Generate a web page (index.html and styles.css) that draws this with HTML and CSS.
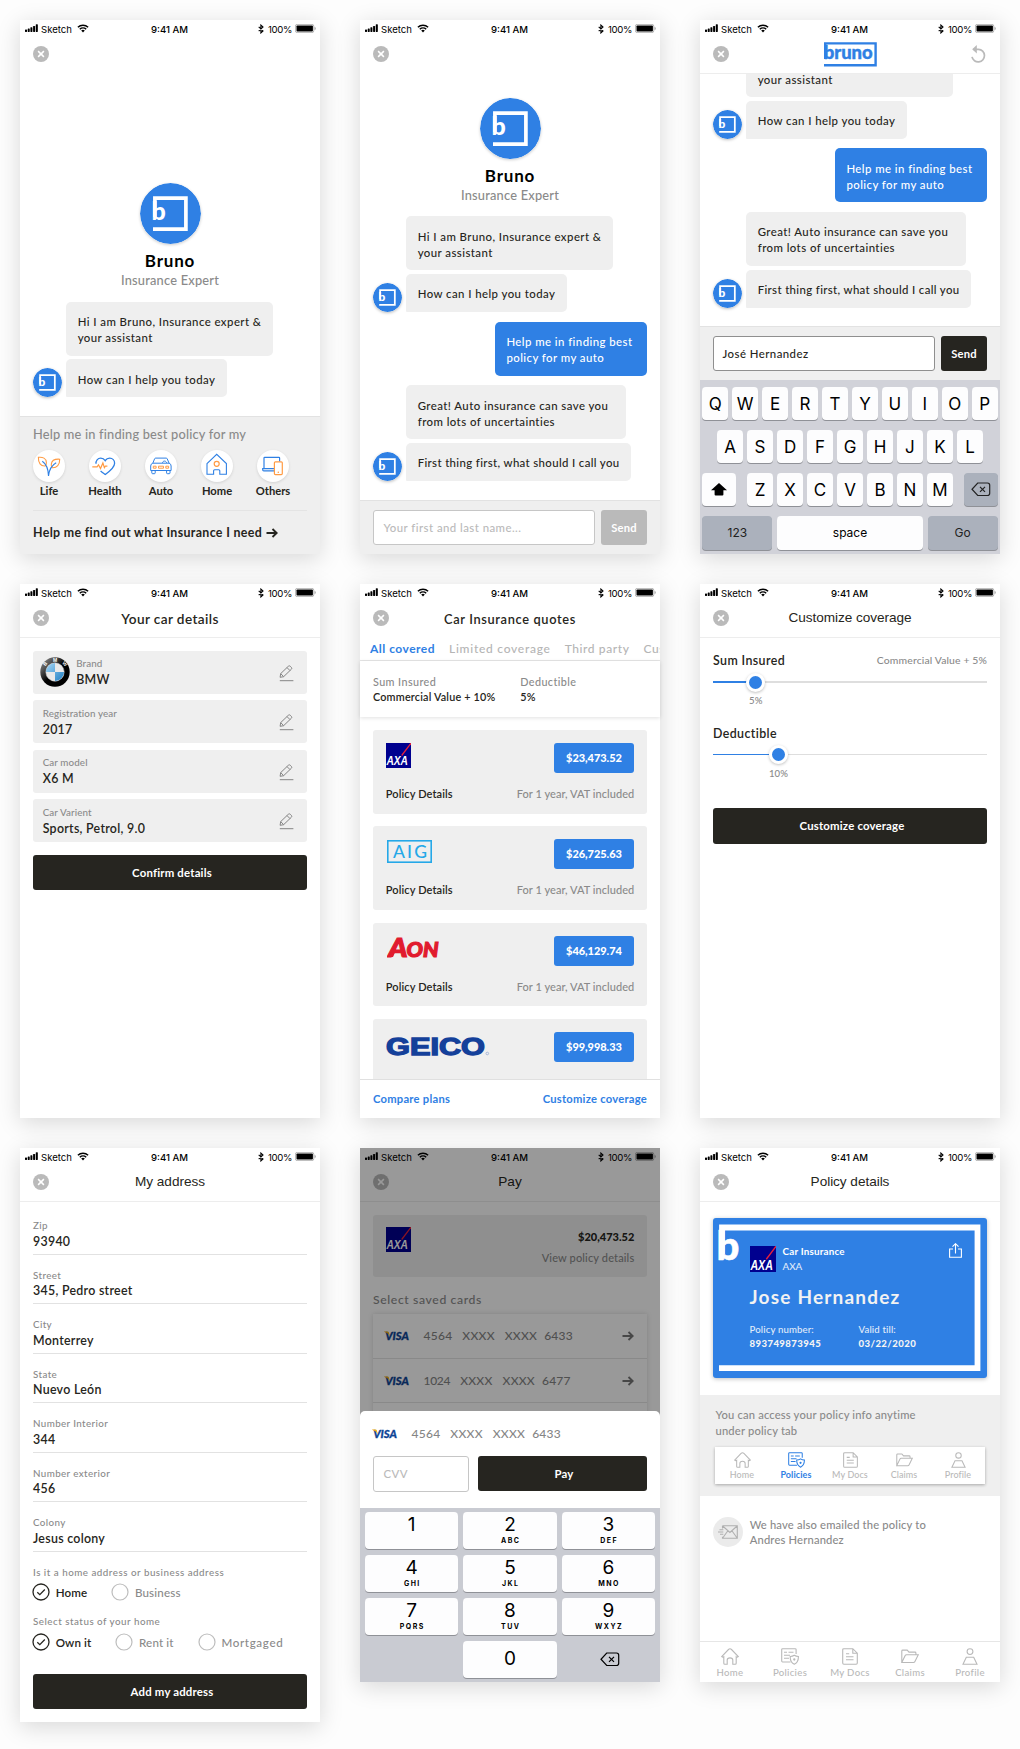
FILE: index.html
```
<!DOCTYPE html>
<html lang="en">
<head>
<meta charset="utf-8">
<title>Bruno – Insurance assistant</title>
<link rel="stylesheet" href="styles.css">
</head>
<body>
<svg class="sprite" aria-hidden="true">
  <symbol id="signal" viewBox="0 0 14 9"><rect x="0" y="5.6" width="2.1" height="2.6" rx=".5"/><rect x="2.8" y="4.6" width="2.1" height="3.6" rx=".5"/><rect x="5.6" y="3.2" width="2.1" height="5" rx=".5"/><rect x="8.4" y="1.8" width="2.1" height="6.4" rx=".5"/><rect x="11.2" y=".2" width="2.1" height="8" rx=".5"/></symbol>
  <symbol id="wifi" viewBox="0 0 12 9"><path d="M.9 3.2a7.4 7.4 0 0 1 10.2 0M2.8 5.2a4.7 4.7 0 0 1 6.4 0" fill="none" stroke="currentColor" stroke-width="1.5"/><path d="M6 8.4 4.2 6.5a2.6 2.6 0 0 1 3.6 0z"/></symbol>
  <symbol id="bluetooth" viewBox="0 0 6 10"><path d="M.7 2.8 5 6.9 2.9 8.9V1.1L5 3.1.7 7.2" fill="none" stroke="currentColor" stroke-width="1.1"/></symbol>
  <symbol id="battery" viewBox="0 0 21 9"><rect x=".4" y=".4" width="18.4" height="8.2" rx="1.8" fill="none" stroke="#000" stroke-opacity=".4" stroke-width=".7"/><rect x="1.5" y="1.4" width="16.4" height="6.2" rx=".8"/><path d="M19.7 3v3c.7-.2 1-.8 1-1.500s-.3-1.300-1-1.500z" opacity=".4"/></symbol>
  <symbol id="close" viewBox="0 0 16 16"><circle cx="8" cy="8" r="8" fill="#bababa"/><path d="M5.100 5.100l5.800 5.800M10.900 5.100l-5.800 5.800" stroke="#fff" stroke-width="1.500" fill="none"/></symbol>
  <symbol id="life" viewBox="0 0 32 32"><path d="M5.400 7.300c4.200-.5 8 .9 8 5.300 0 1.600-.5 2.800-1.100 3.300-4.700.4-7.100-3.100-6.900-8.600zM26.700 9.200c-4.200-.3-7.900 1-8.400 4.900-.2 1.600.3 2.900.9 3.600 4.700.3 7.600-2.900 7.500-8.500z" fill="none" stroke="#ff9b44" stroke-width="1.100"/><path d="M9.300 11.300c3.700 2.500 6 6.500 6.200 14.700M23.200 12.700c-4.300 2.300-6.900 5.800-7.700 13.300" fill="none" stroke="#2f80e4" stroke-width="1.100"/></symbol>
  <symbol id="health" viewBox="0 0 32 32"><path d="M7 13.800c-.3-3 1.700-5.700 4.700-5.700 2 0 3.500 1 4.500 2.600 1-1.600 2.500-2.600 4.500-2.600 2.900 0 4.900 2.400 4.900 5.200 0 4.600-5.300 8.300-9.400 11.200-1.500-1.100-3.100-2.200-4.600-3.500" fill="none" stroke="#2f80e4" stroke-width="1.300"/><path d="M3.300 16.800h4.800l1.400-2 2 3.800 2.400-5.600 1.500 4.600 1-1.400h2" fill="none" stroke="#ff9b44" stroke-width="1.200"/></symbol>
  <symbol id="auto" viewBox="0 0 32 32"><g fill="none" stroke="#2f80e4" stroke-width="1"><path d="M7.800 13.200 9.600 8.800q.3-.7 1-.7h10.600q.7 0 1 .7l1.900 4.400q2 .6 2 2.800v4.500H5.700V16q0-2.200 2.100-2.800h16.300M17.500 13c.2-2.300 3.200-2.800 4.200-.2M6.800 20.700v2.200q0 .8.800.8h1.800q.8 0 .8-.8v-2.200M21.600 20.700v2.200q0 .8.800.8h1.800q.8 0 .8-.8v-2.200"/></g><path d="M8.300 16.200h2.800v2H8.300zM20.800 16.200h2.800v2h-2.800zM13.500 16.200h5v2h-5z" fill="none" stroke="#ff9b44" stroke-width="1"/></symbol>
  <symbol id="house" viewBox="0 0 32 32"><path d="M6 13.600 15.700 4.300l9.700 9.300v10.700h-6.600v-3.600q0-1-1-1h-4.200q-1 0-1 1v3.600H6z" fill="none" stroke="#2f80e4" stroke-width="1.100"/><circle cx="15.700" cy="13.800" r="2.500" fill="none" stroke="#ff9b44" stroke-width="1.200"/></symbol>
  <symbol id="devices" viewBox="0 0 32 32"><path d="M17 18.700H7V8q0-.7.700-.7h14.200q.7 0 .7.700v3.500M17 18.700H5.700v1.100q0 1.100 1.100 1.100H17" fill="none" stroke="#2f80e4" stroke-width="1.200"/><rect x="17.400" y="11.800" width="7.900" height="12.800" rx="1" fill="none" stroke="#ff9b44" stroke-width="1.200"/><circle cx="21.300" cy="22.300" r=".8" fill="#ff9b44"/></symbol>
  <symbol id="arrow" viewBox="0 0 12 10"><path d="M.5 5h10M6.500 1l4.200 4-4.200 4" fill="none" stroke="currentColor" stroke-width="1.900"/></symbol>
  <symbol id="refresh" viewBox="0 0 17 18"><path d="M3.100 4.300h5.400a6.300 6.300 0 1 1-6.500 7.600" fill="none" stroke="#bababa" stroke-width="1.700"/><path d="M6.800 0v8.400L2.200 4.200z" fill="#bababa"/></symbol>
  <symbol id="pencil" viewBox="0 0 15 17"><path d="M1.100 12.300l.6-3.700L9.300 1.300q1-1 2 0l1 1q1 1 0 2L4.600 11.700zM8 2.600l3 3M1.700 8.600l2.900 3M.8 15.700h13.600" fill="none" stroke="#858585" stroke-width="1"/></symbol>
  <symbol id="home" viewBox="0 0 18 17"><path d="M.7 8.600 7.500 1.500q1.500-1.500 3 0l6.800 7.100q-1.200 1-2.100.2v6.500q0 1-1 1h-2.400v-4.200q0-2.200-2.800-2.200t-2.800 2.200v4.200H3.800q-1 0-1-1V8.800q-1 .8-2.100-.2z"/></symbol>
  <symbol id="policies" viewBox="0 0 18 17"><path d="M9.500 14H1.600q-.9 0-.9-.9V1.600q0-.9.900-.9h12.600q.9 0 .9.900v4.500M3 4.200h3M7.500 4.200h5M3 7.200h6M3 10.200h5"/><path d="M13.300 7.300c1.300.9 2.600 1.200 4.100 1.200.1 3.500-.8 6-4.100 7.700-3.300-1.700-4.200-4.200-4.100-7.700 1.500 0 2.800-.3 4.100-1.200z"/><circle cx="13.300" cy="11.500" r=".6"/></symbol>
  <symbol id="docs" viewBox="0 0 18 17"><path d="M11.800.7H2.900q-1.200 0-1.200 1.200v13.200q0 1.200 1.200 1.200h12.200q1.200 0 1.200-1.200V5.200zM11.800.7v4.500h4.500M5 5.700h3.200M5 8.700h7.500M5 11.700h7.500"/></symbol>
  <symbol id="claims" viewBox="0 0 18 17"><path d="M.8 14.500V3q0-.9.900-.9h4.500l1.800 2h6q.9 0 .9.900v1.700M.8 14.500l3.400-7q.4-.8 1.300-.8h11.800l-3.500 7q-.4.800-1.300.8z"/></symbol>
  <symbol id="profile" viewBox="0 0 18 17"><circle cx="9" cy="3.600" r="2.900"/><path d="M2 16.300 5.300 9.300h7.400l3.300 7z"/></symbol>
  <symbol id="share" viewBox="0 0 13 15"><path d="M4 6H.6v8.200h11.800V6H9M6.500 10.500V1M3.500 3.700l3-3 3 3" fill="none" stroke="#fff" stroke-width="1.100"/></symbol>
  <symbol id="mail" viewBox="0 0 20 14"><path d="M4.500.8h14.800v12.400H4.500v-1.500M4.500.8v2.700M4.700 1l7.200 6.500L19.100 1M4.700 13l5-7M19.100 13l-5-7M1.500 4.700h3.800M0 7h5.300M2 9.300h3.300" fill="none" stroke="#b0b0b0" stroke-width="1.100"/></symbol>
  <symbol id="backspace" viewBox="0 0 20 15"><path d="M6.700 1h9.800q2.200 0 2.200 2.200v8.100q0 2.200-2.200 2.200H6.700L1 7.250z" fill="none" stroke="currentColor" stroke-width="1.200"/><path d="M9 4.800l5 5M14 4.800l-5 5" stroke="currentColor" stroke-width="1.200"/></symbol>
  <symbol id="shift" viewBox="0 0 16 13"><path d="M8 0l8 7.200h-3.600v4.200q0 1-1 1H4.600q-1 0-1-1V7.200H0z"/></symbol>
  <symbol id="checked" viewBox="0 0 18 18"><circle cx="9" cy="9" r="8" fill="none" stroke="#262520" stroke-width="1.300"/><path d="M5.300 9.300l2.500 2.400 5-5.200" fill="none" stroke="#262520" stroke-width="1.300"/></symbol>
  <symbol id="unchecked" viewBox="0 0 18 18"><circle cx="9" cy="9" r="8" fill="none" stroke="#bdbdbd" stroke-width="1.200"/></symbol>
</svg>

<main class="board">

<section class="phone">
  <div class="status"><svg class="signal"><use href="#signal"/></svg><span class="carrier">Sketch</span><svg class="wifi"><use href="#wifi"/></svg><span class="time">9:41 AM</span><svg class="bt"><use href="#bluetooth"/></svg><span class="pct">100%</span><svg class="battery"><use href="#battery"/></svg></div>
  <header class="nav plain"><svg class="close"><use href="#close"/></svg></header>
  <div class="hero low"><svg class="portrait" viewBox="0 0 61 61"><circle cx="30.500" cy="30.500" r="30.500"/><path d="M14.900 34V15.200h31v30.900H13"/><text x="11.600" y="37">b</text></svg><h1>Bruno</h1><p>Insurance Expert</p></div>
  <div class="chat">
    <div class="turn"><svg class="avatar" viewBox="0 0 61 61"><circle cx="30.500" cy="30.500" r="30.500"/><path d="M14.900 34V15.200h31v30.900H13"/><text x="11.600" y="37">b</text></svg><div class="stack"><p class="bubble">Hi I am Bruno, Insurance expert &amp;<br>your assistant</p><p class="bubble">How can I help you today</p></div></div>
  </div>
  <div class="picker">
    <p class="picker-title">Help me in finding best policy for my</p>
    <ul class="kinds">
      <li><svg><use href="#life"/></svg>Life</li>
      <li><svg><use href="#health"/></svg>Health</li>
      <li><svg><use href="#auto"/></svg>Auto</li>
      <li><svg><use href="#house"/></svg>Home</li>
      <li><svg><use href="#devices"/></svg>Others</li>
    </ul>
    <p class="find">Help me find out what Insurance I need <svg><use href="#arrow"/></svg></p>
  </div>
</section>

<section class="phone">
  <div class="status"><svg class="signal"><use href="#signal"/></svg><span class="carrier">Sketch</span><svg class="wifi"><use href="#wifi"/></svg><span class="time">9:41 AM</span><svg class="bt"><use href="#bluetooth"/></svg><span class="pct">100%</span><svg class="battery"><use href="#battery"/></svg></div>
  <header class="nav plain"><svg class="close"><use href="#close"/></svg></header>
  <div class="hero"><svg class="portrait" viewBox="0 0 61 61"><circle cx="30.500" cy="30.500" r="30.500"/><path d="M14.900 34V15.200h31v30.900H13"/><text x="11.600" y="37">b</text></svg><h1>Bruno</h1><p>Insurance Expert</p></div>
  <div class="chat">
    <div class="turn"><svg class="avatar" viewBox="0 0 61 61"><circle cx="30.500" cy="30.500" r="30.500"/><path d="M14.900 34V15.200h31v30.900H13"/><text x="11.600" y="37">b</text></svg><div class="stack"><p class="bubble">Hi I am Bruno, Insurance expert &amp;<br>your assistant</p><p class="bubble">How can I help you today</p></div></div>
    <p class="bubble mine">Help me in finding best<br>policy for my auto</p>
    <div class="turn"><svg class="avatar" viewBox="0 0 61 61"><circle cx="30.500" cy="30.500" r="30.500"/><path d="M14.900 34V15.200h31v30.900H13"/><text x="11.600" y="37">b</text></svg><div class="stack"><p class="bubble wide">Great! Auto insurance can save you<br>from lots of uncertainties</p><p class="bubble snug">First thing first, what should I call you</p></div></div>
  </div>
  <div class="composer"><div class="field hint">Your first and last name...</div><div class="send off">Send</div></div>
</section>

<section class="phone">
  <div class="status"><svg class="signal"><use href="#signal"/></svg><span class="carrier">Sketch</span><svg class="wifi"><use href="#wifi"/></svg><span class="time">9:41 AM</span><svg class="bt"><use href="#bluetooth"/></svg><span class="pct">100%</span><svg class="battery"><use href="#battery"/></svg></div>
  <header class="nav"><svg class="close"><use href="#close"/></svg>
    <svg class="wordmark" viewBox="0 0 53 25"><path d="M1.200 17V1.400h50.400v21.800H0" fill="none" stroke="#2f80e4" stroke-width="2.400"/><text x="-.3" y="16.700" textLength="49" lengthAdjust="spacingAndGlyphs" font-family="Lato, sans-serif" font-weight="900" font-size="18.500" fill="#2f80e4" stroke="#2f80e4" stroke-width=".4">bruno</text></svg>
    <svg class="refresh"><use href="#refresh"/></svg></header>
  <div class="chat scrolled">
    <div class="turn"><svg class="avatar" viewBox="0 0 61 61"><circle cx="30.500" cy="30.500" r="30.500"/><path d="M14.900 34V15.200h31v30.900H13"/><text x="11.600" y="37">b</text></svg><div class="stack"><p class="bubble tail">your assistant</p><p class="bubble">How can I help you today</p></div></div>
    <p class="bubble mine">Help me in finding best<br>policy for my auto</p>
    <div class="turn"><svg class="avatar" viewBox="0 0 61 61"><circle cx="30.500" cy="30.500" r="30.500"/><path d="M14.900 34V15.200h31v30.900H13"/><text x="11.600" y="37">b</text></svg><div class="stack"><p class="bubble wide">Great! Auto insurance can save you<br>from lots of uncertainties</p><p class="bubble snug">First thing first, what should I call you</p></div></div>
  </div>
  <div class="composer"><div class="field typed">José Hernandez</div><div class="send">Send</div></div>
  <div class="keyboard">
    <div class="keys"><kbd>Q</kbd><kbd>W</kbd><kbd>E</kbd><kbd>R</kbd><kbd>T</kbd><kbd>Y</kbd><kbd>U</kbd><kbd>I</kbd><kbd>O</kbd><kbd>P</kbd></div>
    <div class="keys"><kbd>A</kbd><kbd>S</kbd><kbd>D</kbd><kbd>F</kbd><kbd>G</kbd><kbd>H</kbd><kbd>J</kbd><kbd>K</kbd><kbd>L</kbd></div>
    <div class="keys spread"><kbd class="side"><svg class="shift"><use href="#shift"/></svg></kbd><div class="keys"><kbd>Z</kbd><kbd>X</kbd><kbd>C</kbd><kbd>V</kbd><kbd>B</kbd><kbd>N</kbd><kbd>M</kbd></div><kbd class="side dark"><svg class="erase"><use href="#backspace"/></svg></kbd></div>
    <div class="keys words spread"><kbd class="fn dark">123</kbd><kbd class="space">space</kbd><kbd class="fn dark">Go</kbd></div>
  </div>
</section>

<section class="phone">
  <div class="status"><svg class="signal"><use href="#signal"/></svg><span class="carrier">Sketch</span><svg class="wifi"><use href="#wifi"/></svg><span class="time">9:41 AM</span><svg class="bt"><use href="#bluetooth"/></svg><span class="pct">100%</span><svg class="battery"><use href="#battery"/></svg></div>
  <header class="nav"><svg class="close"><use href="#close"/></svg><h2>Your car details</h2></header>
  <div class="details">
    <div class="detail"><svg class="bmw" viewBox="0 0 30 30">
      <defs><linearGradient id="rim" x1="0" y1="0" x2="1" y2="1"><stop offset="0" stop-color="#999"/><stop offset=".25" stop-color="#555"/><stop offset=".5" stop-color="#000"/></linearGradient><linearGradient id="sky" x1="0" y1="0" x2="1" y2="1"><stop offset="0" stop-color="#a5d6f5"/><stop offset="1" stop-color="#1f7fc4"/></linearGradient></defs>
      <circle cx="15" cy="15" r="14.700" fill="url(#rim)"/><circle cx="15" cy="15" r="9.200" fill="#e9e9e9" stroke="#c8c8c8" stroke-width=".5"/><path d="M15 15V6a9 9 0 0 0-9 9zM15 15v9a9 9 0 0 0 9-9z" fill="url(#sky)"/>
      <g font-family="'Liberation Sans', sans-serif" font-weight="700" font-size="5" fill="#fff" text-anchor="middle"><text x="15" y="5.200">M</text><text transform="translate(6.500 8) rotate(-48)">B</text><text transform="translate(23.500 8) rotate(48)">W</text></g></svg>
      <div><span>Brand</span><b>BMW</b></div><svg class="pencil"><use href="#pencil"/></svg></div>
    <div class="detail"><div><span>Registration year</span><b>2017</b></div><svg class="pencil"><use href="#pencil"/></svg></div>
    <div class="detail"><div><span>Car model</span><b>X6 M</b></div><svg class="pencil"><use href="#pencil"/></svg></div>
    <div class="detail"><div><span>Car Varient</span><b>Sports, Petrol, 9.0</b></div><svg class="pencil"><use href="#pencil"/></svg></div>
  </div>
  <div class="button confirm">Confirm details</div>
</section>

<section class="phone">
  <div class="status"><svg class="signal"><use href="#signal"/></svg><span class="carrier">Sketch</span><svg class="wifi"><use href="#wifi"/></svg><span class="time">9:41 AM</span><svg class="bt"><use href="#bluetooth"/></svg><span class="pct">100%</span><svg class="battery"><use href="#battery"/></svg></div>
  <header class="nav plain"><svg class="close"><use href="#close"/></svg><h2 class="quotes-title">Car Insurance quotes</h2></header>
  <div class="cover-tabs"><span class="on">All covered</span><span>Limited coverage</span><span class="tight">Third party</span><span class="tight">Cus</span></div>
  <div class="summary"><div><span>Sum Insured</span><b>Commercial Value + 10%</b></div><div><span>Deductible</span><b>5%</b></div></div>
  <div class="quotes">
    <article class="quote"><div><svg class="logo-axa" viewBox="0 0 26 25" preserveAspectRatio="none"><rect width="26" height="25"/><path d="M25.700 0 16 12.500"/><text x=".4" y="22.500" textLength="22" lengthAdjust="spacingAndGlyphs">AXA</text></svg><strong>$23,473.52</strong></div><p><b>Policy Details</b><span>For 1 year, VAT included</span></p></article>
    <article class="quote"><div><svg class="logo-aig" viewBox="0 0 45 24"><rect x=".8" y=".8" width="43.400" height="21.400" fill="none" stroke="#25a8e8" stroke-width="1.600"/><text x="6" y="17.800" textLength="34" font-family="Lato, sans-serif" font-weight="500" font-size="17.500" fill="#25a8e8">AIG</text></svg><strong>$26,725.63</strong></div><p><b>Policy Details</b><span>For 1 year, VAT included</span></p></article>
    <article class="quote"><div><svg class="logo-aon" viewBox="0 0 52 23"><g font-family="Lato, sans-serif" font-weight="900" font-style="italic" fill="#e11b2e" stroke="#e11b2e" stroke-width="1.200"><text x="1.500" y="20.500" font-size="27" textLength="19" lengthAdjust="spacingAndGlyphs">A</text><text x="19.500" y="20.500" font-size="21" textLength="32" lengthAdjust="spacingAndGlyphs">ON</text></g><path d="M0 21h6l2-4.500H3.500z" fill="#e11b2e"/></svg><strong>$46,129.74</strong></div><p><b>Policy Details</b><span>For 1 year, VAT included</span></p></article>
    <article class="quote"><div><svg class="logo-geico" viewBox="0 0 104 20"><text x="0" y="18" font-family="'Liberation Sans', sans-serif" font-weight="700" font-size="23" textLength="99" lengthAdjust="spacingAndGlyphs" fill="#14409a" stroke="#14409a" stroke-width="1.300">GEICO</text><circle cx="101.300" cy="16.500" r="1.300" fill="none" stroke="#8ea3cf" stroke-width=".7"/></svg><strong>$99,998.33</strong></div></article>
  </div>
  <footer class="actions"><span>Compare plans</span><span>Customize coverage</span></footer>
</section>

<section class="phone">
  <div class="status"><svg class="signal"><use href="#signal"/></svg><span class="carrier">Sketch</span><svg class="wifi"><use href="#wifi"/></svg><span class="time">9:41 AM</span><svg class="bt"><use href="#bluetooth"/></svg><span class="pct">100%</span><svg class="battery"><use href="#battery"/></svg></div>
  <header class="nav"><svg class="close"><use href="#close"/></svg><h2 class="system">Customize coverage</h2></header>
  <div class="sliders">
    <div class="slider"><p><b>Sum Insured</b><span>Commercial Value + 5%</span></p><div class="track thick"><i style="width:15.400%"></i><em style="left:15.400%"></em><small style="left:15.600%">5%</small></div></div>
    <div class="slider"><p><b>Deductible</b></p><div class="track"><i style="width:23.900%"></i><em style="left:23.900%"></em><small style="left:23.900%">10%</small></div></div>
  </div>
  <div class="button customize">Customize coverage</div>
</section>

<section class="phone tall">
  <div class="status"><svg class="signal"><use href="#signal"/></svg><span class="carrier">Sketch</span><svg class="wifi"><use href="#wifi"/></svg><span class="time">9:41 AM</span><svg class="bt"><use href="#bluetooth"/></svg><span class="pct">100%</span><svg class="battery"><use href="#battery"/></svg></div>
  <header class="nav"><svg class="close"><use href="#close"/></svg><h2 class="system">My address</h2></header>
  <div class="form">
    <div class="row"><span>Zip</span><b>93940</b></div>
    <div class="row"><span>Street</span><b>345, Pedro street</b></div>
    <div class="row"><span>City</span><b>Monterrey</b></div>
    <div class="row"><span>State</span><b>Nuevo León</b></div>
    <div class="row"><span>Number Interior</span><b>344</b></div>
    <div class="row"><span>Number exterior</span><b>456</b></div>
    <div class="row"><span>Colony</span><b>Jesus colony</b></div>
    <p class="question">Is it a home address or business address</p>
    <div class="choices"><span class="picked"><svg><use href="#checked"/></svg>Home</span><span><svg><use href="#unchecked"/></svg>Business</span></div>
    <p class="question">Select status of your home</p>
    <div class="choices"><span class="picked"><svg><use href="#checked"/></svg>Own it</span><span><svg><use href="#unchecked"/></svg>Rent it</span><span class="loose"><svg><use href="#unchecked"/></svg>Mortgaged</span></div>
  </div>
  <div class="button add">Add my address</div>
</section>

<section class="phone">
  <div class="status"><svg class="signal"><use href="#signal"/></svg><span class="carrier">Sketch</span><svg class="wifi"><use href="#wifi"/></svg><span class="time">9:41 AM</span><svg class="bt"><use href="#bluetooth"/></svg><span class="pct">100%</span><svg class="battery"><use href="#battery"/></svg></div>
  <header class="nav"><svg class="close"><use href="#close"/></svg><h2 class="system">Pay</h2></header>
  <div class="order"><svg class="logo-axa" viewBox="0 0 26 25" preserveAspectRatio="none"><rect width="26" height="25"/><path d="M25.700 0 16 12.500"/><text x=".4" y="22.500" textLength="22" lengthAdjust="spacingAndGlyphs">AXA</text></svg><div><b>$20,473.52</b><span>View policy details</span></div></div>
  <p class="saved-title">Select saved cards</p>
  <div class="saved">
    <div class="card-row"><svg class="visa" viewBox="0 0 26 10"><text x="1.200" y="9" textLength="23.800" lengthAdjust="spacingAndGlyphs">VISA</text><path d="M0 .4h3.600q1 0 1.200 1l1 3.600Q4 1.700 0 .7z"/></svg><span class="digits"><span>4564</span><span>XXXX</span><span>XXXX</span><span>6433</span></span><svg class="go"><use href="#arrow"/></svg></div>
    <div class="card-row"><svg class="visa" viewBox="0 0 26 10"><text x="1.200" y="9" textLength="23.800" lengthAdjust="spacingAndGlyphs">VISA</text><path d="M0 .4h3.600q1 0 1.200 1l1 3.600Q4 1.700 0 .7z"/></svg><span class="digits"><span class="narrow">1024</span><span>XXXX</span><span>XXXX</span><span>6477</span></span><svg class="go"><use href="#arrow"/></svg></div>
    <div class="card-row"></div>
  </div>
  <div class="shade"></div>
  <div class="sheet">
    <div class="chosen"><svg class="visa" viewBox="0 0 26 10"><text x="1.200" y="9" textLength="23.800" lengthAdjust="spacingAndGlyphs">VISA</text><path d="M0 .4h3.600q1 0 1.200 1l1 3.600Q4 1.700 0 .7z"/></svg><span class="digits"><span>4564</span><span>XXXX</span><span>XXXX</span><span>6433</span></span></div>
    <div class="pay-row"><div class="field hint">CVV</div><div class="button">Pay</div></div>
    <div class="keypad">
      <kbd>1<small></small></kbd><kbd>2<small>ABC</small></kbd><kbd>3<small>DEF</small></kbd>
      <kbd>4<small>GHI</small></kbd><kbd>5<small>JKL</small></kbd><kbd>6<small>MNO</small></kbd>
      <kbd>7<small>PQRS</small></kbd><kbd>8<small>TUV</small></kbd><kbd>9<small>WXYZ</small></kbd>
      <kbd class="bare"></kbd><kbd class="zero">0</kbd><kbd class="bare"><svg class="erase"><use href="#backspace"/></svg></kbd>
    </div>
  </div>
</section>

<section class="phone">
  <div class="status"><svg class="signal"><use href="#signal"/></svg><span class="carrier">Sketch</span><svg class="wifi"><use href="#wifi"/></svg><span class="time">9:41 AM</span><svg class="bt"><use href="#bluetooth"/></svg><span class="pct">100%</span><svg class="battery"><use href="#battery"/></svg></div>
  <header class="nav"><svg class="close"><use href="#close"/></svg><h2 class="system">Policy details</h2></header>
  <div class="policy">
    <svg class="frame" viewBox="0 0 274 160"><path d="M9 36V9.500h255.500v140.600H6" fill="none" stroke="#fff" stroke-width="5.800"/><text x="3.600" y="41.800" font-family="Lato, sans-serif" font-weight="900" font-size="40" fill="#fff" stroke="#fff" stroke-width=".6">b</text></svg>
    <div class="policy-head"><svg class="logo-axa" viewBox="0 0 26 25" preserveAspectRatio="none"><rect width="26" height="25"/><path d="M25.700 0 16 12.500"/><text x=".4" y="22.500" textLength="22" lengthAdjust="spacingAndGlyphs">AXA</text></svg><div><b>Car Insurance</b><span>AXA</span></div><svg class="share"><use href="#share"/></svg></div>
    <p class="holder">Jose Hernandez</p>
    <div class="facts"><div><span>Policy number:</span><b>893749873945</b></div><div><span>Valid till:</span><b>03/22/2020</b></div></div>
  </div>
  <div class="tip"><p>You can access your policy info anytime<br>under policy tab</p>
    <div class="tabs mini"><span><svg><use href="#home"/></svg>Home</span><span class="on"><svg><use href="#policies"/></svg>Policies</span><span><svg><use href="#docs"/></svg>My Docs</span><span><svg><use href="#claims"/></svg>Claims</span><span><svg><use href="#profile"/></svg>Profile</span></div>
  </div>
  <div class="mailed"><div class="disc"><svg><use href="#mail"/></svg></div><p>We have also emailed the policy to<br>Andres Hernandez</p></div>
  <footer class="tabs main"><span><svg><use href="#home"/></svg>Home</span><span><svg><use href="#policies"/></svg>Policies</span><span><svg><use href="#docs"/></svg>My Docs</span><span><svg><use href="#claims"/></svg>Claims</span><span><svg><use href="#profile"/></svg>Profile</span></footer>
</section>

</main>
</body>
</html>
```
FILE: styles.css
```
* { box-sizing: border-box; }

body {
  margin: 0;
  background: #fdfdfd;
  color: #262520;
  font-family: Lato, sans-serif;
  font-weight: 500;
}

h1, h2, p, ul { margin: 0; padding: 0; font-weight: inherit; }
b { font-weight: 600; }
svg { display: block; flex: none; }
.sprite { position: absolute; width: 0; height: 0; }

.board {
  display: grid;
  grid-template-columns: repeat(3, 300px);
  grid-template-rows: 534px 534px auto;
  gap: 30px 40px;
  align-items: start;
  padding: 20px 20px 27px;
}

.phone {
  position: relative;
  display: flex;
  flex-direction: column;
  height: 534px;
  background: #fff;
  box-shadow: 0 5px 22px rgba(0, 0, 0, .15);
}
.phone.tall { height: 574px; }

/* status bar */
.status {
  display: flex;
  align-items: center;
  height: 16px;
  padding: 1px 4.500px 0 5px;
  font: 400 9.600px/15px Inter, sans-serif;
  color: #000;
}
.status span { padding-top: 1px; }
.signal { width: 13.500px; height: 9px; }
.carrier { margin-left: 2.500px; }
.wifi { width: 12px; height: 9px; margin-left: 5px; }
.time { margin: 0 auto 0 62px; font-weight: 500; }
.bt { width: 6px; height: 10px; }
.pct { margin: 0 2.500px 0 3.500px; letter-spacing: -.35px; }
.battery { width: 21px; height: 9px; }

/* title bar */
.nav {
  display: grid;
  grid-template-columns: 16px 1fr 16px;
  align-items: start;
  height: 38px;
  padding: 9.700px 13px 0;
  border-bottom: 1px solid #ededed;
}
.nav.plain { border-bottom-color: transparent; }
.close { width: 16px; height: 16px; }
.nav h2 {
  text-align: center;
  font-size: 13.600px;
  font-weight: 600;
  line-height: 18px;
  letter-spacing: .39px;
  margin-top: .5px;
}
.nav .quotes-title { font-size: 12.800px; letter-spacing: .65px; }
.nav .system {
  font: 400 13.600px/18px "Liberation Sans", sans-serif;
  letter-spacing: -.04px;
  margin-top: -.700px;
}
.wordmark { width: 53px; height: 25px; margin: -3.500px auto 0; }
.refresh { width: 17px; height: 18px; margin: -1px 0 0 -1px; }

/* chat */
.hero { padding-top: 23.500px; text-align: center; }
.hero.low { padding-top: 109px; }
.portrait, .avatar { border-radius: 50%; }
.portrait circle, .avatar circle { fill: #2f80e4; }
.portrait path, .avatar path { fill: none; stroke: #fff; stroke-width: 3.700px; }
.portrait text, .avatar text { font: 900 25px Lato, sans-serif; letter-spacing: 0; fill: #fff; }
.portrait { width: 61px; height: 61px; margin: 0 auto; box-shadow: 0 1px 3px rgba(0, 0, 0, .2); }
.hero h1 { margin-top: 6.400px; font-size: 17px; font-weight: 700; line-height: 22px; letter-spacing: .8px; color: #000; }
.hero p { font-size: 12.800px; line-height: 17px; letter-spacing: .22px; color: #8a8a8a; }
.chat { display: flex; flex-direction: column; gap: 9.700px; padding: 12.600px 13px 0; font-size: 11.400px; line-height: 16px; letter-spacing: .44px; }
.chat.scrolled { height: 252px; overflow: hidden; justify-content: flex-end; padding: 0 13px 18px; }
.turn { display: flex; align-items: flex-end; gap: 4.300px; }
.avatar { width: 29px; height: 29px; box-shadow: 0 1px 3px rgba(0, 0, 0, .25); }
.stack { display: flex; flex-direction: column; align-items: flex-start; gap: 3.500px; }
.bubble { padding: 12.300px 11.400px 9.700px 11.400px; border-radius: 5px; background: #efefef; white-space: nowrap; }
.stack .bubble:last-child { border-bottom-left-radius: 1px; }
.bubble.wide { min-width: 219.500px; }
.bubble.snug { letter-spacing: .36px; }
.bubble.tail { width: 206.500px; padding-top: 0; border-radius: 0 0 5px 5px; }
.bubble.mine { align-self: flex-end; width: 152px; background: #2f80e4; color: #fff; }

.picker { height: 138px; margin-top: auto; padding: 8.700px 13px 0; border-top: 1px solid #e2e2e2; background: #efefef; }
.picker-title { font-size: 12.800px; line-height: 16px; letter-spacing: .19px; color: #8a8a8a; }
.kinds { display: flex; list-style: none; margin: 8.300px 0 0 -12px; }
.kinds li { flex: none; width: 56px; font-size: 11.200px; font-weight: 700; line-height: 14px; text-align: center; }
.kinds svg { width: 32px; height: 32px; margin: 0 auto 1.800px; border-radius: 50%; background: #fff; box-shadow: 0 1px 3px rgba(0, 0, 0, .12); }
.find { display: flex; align-items: center; gap: 4px; margin-top: 12.600px; padding-top: 13.500px; border-top: 1.500px solid #e4e4e4; font-size: 12.400px; font-weight: 700; line-height: 16px; letter-spacing: .34px; }
.find svg { width: 12px; height: 10px; margin-top: 1px; }

.composer { display: flex; gap: 6.500px; height: 54.500px; margin-top: auto; padding: 9px 13px 0; border-top: 1px solid #e2e2e2; background: #efefef; }
.field { width: 221.500px; height: 35px; padding-left: 9.500px; border: 1px solid #c6c6c6; border-radius: 3px; background: #fff; font-size: 11.400px; line-height: 33px; letter-spacing: .45px; }
.field.hint { color: #bababa; }
.field.typed { padding-left: 8.500px; border-color: #8f8f8f; }
.send { width: 46px; height: 35px; border-radius: 3px; background: #262520; color: #fff; font-size: 11.200px; font-weight: 700; line-height: 35px; letter-spacing: .18px; text-align: center; }
.send.off { background: #bababa; }

/* letter keyboard */
kbd { font-family: Inter, sans-serif; font-weight: 400; }
.keyboard { display: flex; flex: none; flex-direction: column; gap: 9.800px; height: 174px; padding: 7px 2.400px 0; background: #d1d2d9; }
.keys { display: flex; justify-content: center; gap: 4.300px; }
.keys.spread { justify-content: space-between; }
.keyboard kbd {
  display: flex;
  align-items: center;
  justify-content: center;
  width: 25.700px;
  height: 33.300px;
  border-radius: 4px;
  background: #fdfdfe;
  box-shadow: 0 1px 0 #8f9197;
  color: #000;
  font-size: 17px;
}
.keyboard .side { width: 33.500px; }
.keyboard .dark { background: #abb1bc; color: #222; }
.keyboard .words kbd { font-size: 12px; }
.keyboard .fn { width: 70px; }
.keyboard .space { width: 145.500px; }
.shift { width: 16px; height: 13px; }
.erase { width: 20px; height: 15px; }

/* car details */
.details { display: flex; flex-direction: column; gap: 6.600px; padding: 12.700px 13px 0; }
.detail { display: flex; align-items: center; height: 42.900px; padding: 0 13px 0 9.700px; border-radius: 3px; background: #efefef; }
.detail div { display: flex; flex-direction: column; margin-right: auto; padding-top: 1.300px; }
.detail span, .row span { font-size: 9.800px; line-height: 13px; letter-spacing: .1px; color: #8a8a8a; }
.detail b, .row b { margin-top: 1.800px; font-size: 12.400px; line-height: 16px; letter-spacing: .28px; }
.bmw { width: 30px; height: 30px; margin: 0 6.500px 0 -3px; }
.pencil { width: 15px; height: 17px; margin-top: 2px; }
.button { flex: none; height: 35.300px; margin: 0 13px; border-radius: 3px; background: #262520; color: #fff; font-size: 11.400px; font-weight: 700; line-height: 36px; letter-spacing: .18px; text-align: center; }
.confirm { margin-top: 12.700px; padding-left: 4px; }
.customize { margin-top: 27.800px; padding-left: 4px; }
.add { margin-top: 23px; padding-left: 4px; }

/* quotes */
.cover-tabs { display: flex; gap: 14px; height: 23px; padding: 2.600px 0 0 10px; overflow: hidden; border-bottom: 1px solid #e6e6e6; font-size: 12px; line-height: 16px; letter-spacing: .73px; white-space: nowrap; color: #b5b5b5; }
.cover-tabs .on { font-weight: 700; letter-spacing: .49px; color: #2f80e4; }
.cover-tabs .tight { letter-spacing: .6px; }
.summary { display: grid; grid-template-columns: 147.300px 1fr; height: 56px; padding: 13.300px 13px 0; box-shadow: 0 1px 4px rgba(0, 0, 0, .12); font-size: 10.800px; line-height: 15px; }
.summary div { display: flex; flex-direction: column; }
.summary span { letter-spacing: .4px; color: #8a8a8a; }
.summary b { letter-spacing: .19px; }
.quotes { display: flex; flex: 1; flex-direction: column; gap: 12.700px; min-height: 0; padding: 13px 13px 0; overflow: hidden; }
.quote { flex: none; height: 83.700px; padding: 13px 12.700px 0; border-radius: 3px; background: #efefef; font-size: 11px; line-height: 14px; }
.quote div { display: flex; justify-content: space-between; height: 43.900px; }
.quote p { display: flex; justify-content: space-between; }
.quote p b { letter-spacing: .12px; }
.quote span { color: #8a8a8a; letter-spacing: .05px; }
.quote strong { width: 80.700px; height: 30px; border-radius: 3px; background: #2f80e4; color: #fff; font-weight: 900; line-height: 30px; letter-spacing: -.05px; text-align: center; }
.logo-axa { width: 25.500px; height: 25px; }
.logo-axa rect { fill: #00008f; }
.logo-axa path { fill: none; stroke: #e8203a; stroke-width: 1.300px; }
.logo-axa text { font: italic 700 13px "Liberation Sans", sans-serif; letter-spacing: 0; fill: #fff; }
.logo-aig { width: 45px; height: 24px; margin: 1px 0 0 1.500px; }
.logo-aon { width: 52px; height: 23px; margin: 0 0 0 1px; }
.logo-geico { width: 104px; height: 20px; margin-top: 5px; }
.actions { display: flex; justify-content: space-between; height: 39px; padding: 10.500px 13px 0; border-top: 1px solid #e0e0e0; color: #2f80e4; font-size: 11.200px; font-weight: 700; line-height: 16px; letter-spacing: .25px; }

/* coverage sliders */
.sliders { display: flex; flex-direction: column; gap: 18.400px; padding: 15.200px 13px 0; }
.slider { height: 54.500px; }
.slider p { display: flex; justify-content: space-between; line-height: 16px; }
.slider b { font-size: 12.400px; letter-spacing: .4px; }
.slider span { margin-top: -1.500px; font-size: 10.400px; letter-spacing: .13px; color: #8a8a8a; }
.track { position: relative; height: 1.200px; margin-top: 12px; background: #dedede; }
.track.thick { height: 2px; }
.track i { display: block; height: 100%; background: #2f80e4; }
.track em { position: absolute; top: 50%; width: 19px; height: 19px; margin: -9.500px 0 0 -9.500px; border: 3.900px solid #fff; border-radius: 50%; background: #2f80e4; box-shadow: 0 1px 3px rgba(0, 0, 0, .25); }
.track small { position: absolute; top: 14px; transform: translateX(-50%); font-size: 9.600px; line-height: 12px; color: #8a8a8a; }

/* address form */
.form { padding: 3px 13px 0; }
.row { display: flex; flex-direction: column; height: 49.530px; padding-top: 14px; border-bottom: 1px solid #e2e2e2; }
.row span, .question { letter-spacing: .38px; }
.row b { margin-top: 1.800px; }
.question { margin-top: 14px; font-size: 9.800px; line-height: 13px; letter-spacing: .5px; color: #8a8a8a; }
.choices { display: flex; gap: 24px; margin: 4.500px 0 0 -1px; font-size: 11.600px; line-height: 19px; letter-spacing: .15px; color: #8a8a8a; height: 18px; }
.choices span { display: flex; gap: 5.700px; }
.choices .picked { color: #262520; font-weight: 600; letter-spacing: .1px; }
.choices .loose { letter-spacing: .65px; }
.choices svg { width: 18px; height: 18px; }

/* payment */
.order { display: flex; justify-content: space-between; height: 62px; margin: 13px 13px 0; padding: 12px 12.700px 0; border-radius: 3px; background: #efefef; font-size: 11px; }
.order div { display: flex; flex-direction: column; align-items: flex-end; line-height: 21px; }
.order b { font-weight: 900; line-height: 20px; }
.order span { letter-spacing: .14px; color: #8a8a8a; }
.saved-title { margin: 14.500px 13px 0; font-size: 12.200px; line-height: 16px; letter-spacing: .62px; color: #8a8a8a; }
.saved { margin: 6.500px 13px 0; background: #fff; box-shadow: 0 0 5px rgba(0, 0, 0, .15); }
.card-row { display: flex; align-items: center; height: 44.700px; padding: 0 13px 0 11px; border-bottom: 1px solid #e4e4e4; color: #777; }
.visa { width: 26px; height: 10px; }
.visa text { font: italic 900 11.500px Lato, sans-serif; fill: #0e4595; stroke: #0e4595; stroke-width: .3px; }
.visa path { fill: #f2ae14; }
.digits { display: flex; gap: 10px; margin-left: 13.500px; font-size: 12px; line-height: 16px; letter-spacing: .25px; color: #858585; }
.digits span:last-child { margin-left: -3px; }
.digits .narrow { letter-spacing: -.3px; }
.go { width: 12px; height: 10px; margin-left: auto; }
.shade { position: absolute; inset: 0; background: rgba(0, 0, 0, .4); }
.sheet { position: absolute; inset: 263px 0 0; display: flex; flex-direction: column; border-radius: 5px 5px 0 0; background: #fff; }
.chosen { display: flex; align-items: center; height: 45px; padding: 0 0 0 12px; }
.pay-row { display: flex; gap: 9.500px; padding: 0 13px; }
.pay-row .field { width: 95.500px; height: 35.500px; }
.pay-row .button { flex: 1; margin: 0; padding-left: 3px; }
.keypad { display: grid; grid-template-columns: repeat(3, 1fr); grid-auto-rows: 37px; gap: 6px 5.200px; height: 174.500px; margin-top: auto; padding: 4.700px 5px 0; background: #c9cbd2; }
.keypad kbd { display: flex; flex-direction: column; align-items: center; padding-top: 2px; border-radius: 4px; background: #fdfdfe; box-shadow: 0 1px 0 #8f9197; color: #000; font-size: 19px; line-height: 22px; }
.keypad small { margin-top: -.5px; padding-left: 1.500px; font-size: 7px; font-weight: 700; line-height: 10px; letter-spacing: 1.500px; }
.keypad .zero { padding-top: 6.500px; }
.keypad .bare { justify-content: center; padding: 0 0 1px 4px; background: none; box-shadow: none; }

/* policy */
.policy { position: relative; height: 160px; margin: 16.400px 13px 0; padding: 25.300px 25px 0 36.500px; border-radius: 3px; background: #2f80e4; box-shadow: 0 1px 4px rgba(0, 0, 0, .25); color: #fff; }
.frame { position: absolute; inset: 0; width: 274px; height: 160px; }
.policy-head { position: relative; display: flex; font-size: 9.800px; line-height: 15.500px; }
.policy-head .logo-axa { width: 26.500px; height: 26.500px; margin: 1.900px 6.500px 0 0; }
.policy-head div { display: flex; flex-direction: column; }
.policy-head b { font-weight: 700; letter-spacing: .22px; }
.policy-head span, .facts span { opacity: .85; }
.share { width: 13px; height: 15px; margin: -1px 0 0 auto; }
.holder { margin-top: 10px; font-size: 19px; font-weight: 700; line-height: 24px; letter-spacing: 1.200px; color: #f2f2f2; }
.facts { display: grid; grid-template-columns: 109px 1fr; margin-top: 14.800px; font-size: 9.600px; line-height: 13.500px; }
.facts div { display: flex; flex-direction: column; }
.facts span { letter-spacing: .14px; }
.facts b { font-weight: 900; letter-spacing: .41px; color: #f4f4f4; }
.tip { height: 101px; margin-top: 16.500px; padding: 12.500px 15px 0; background: #efefef; }
.tip p, .mailed p { font-size: 11.200px; line-height: 15.200px; letter-spacing: .17px; color: #8a8a8a; }
.tip p { margin-left: .5px; }
.tabs { display: flex; color: #b9b9b9; text-align: center; white-space: nowrap; }
.tabs span { flex: 1 1 0; min-width: 0; }
.tabs svg { margin: 0 auto; fill: none; stroke: currentColor; stroke-width: 1.100px; }
.tabs.mini { height: 37px; margin-top: 9px; padding-top: 5.300px; background: #fff; box-shadow: 0 1px 3px rgba(0, 0, 0, .3); font-size: 9px; line-height: 12px; letter-spacing: .09px; }
.tabs.mini svg { width: 17px; height: 16px; margin-bottom: 1.400px; }
.tabs.mini .on { color: #2f80e4; font-weight: 700; }
.tabs.main { height: 41px; margin-top: auto; padding-top: 6px; border-top: 1px solid #e6e6e6; font-size: 9.600px; line-height: 12px; letter-spacing: .3px; }
.tabs.main svg { width: 18px; height: 17px; margin-bottom: 1.500px; }
.mailed { display: flex; gap: 6.700px; margin: 21px 13px 0; }
.disc { display: flex; align-items: center; justify-content: center; width: 30px; height: 30px; border-radius: 50%; background: #ebebeb; }
.disc svg { width: 20px; height: 14px; }
```
